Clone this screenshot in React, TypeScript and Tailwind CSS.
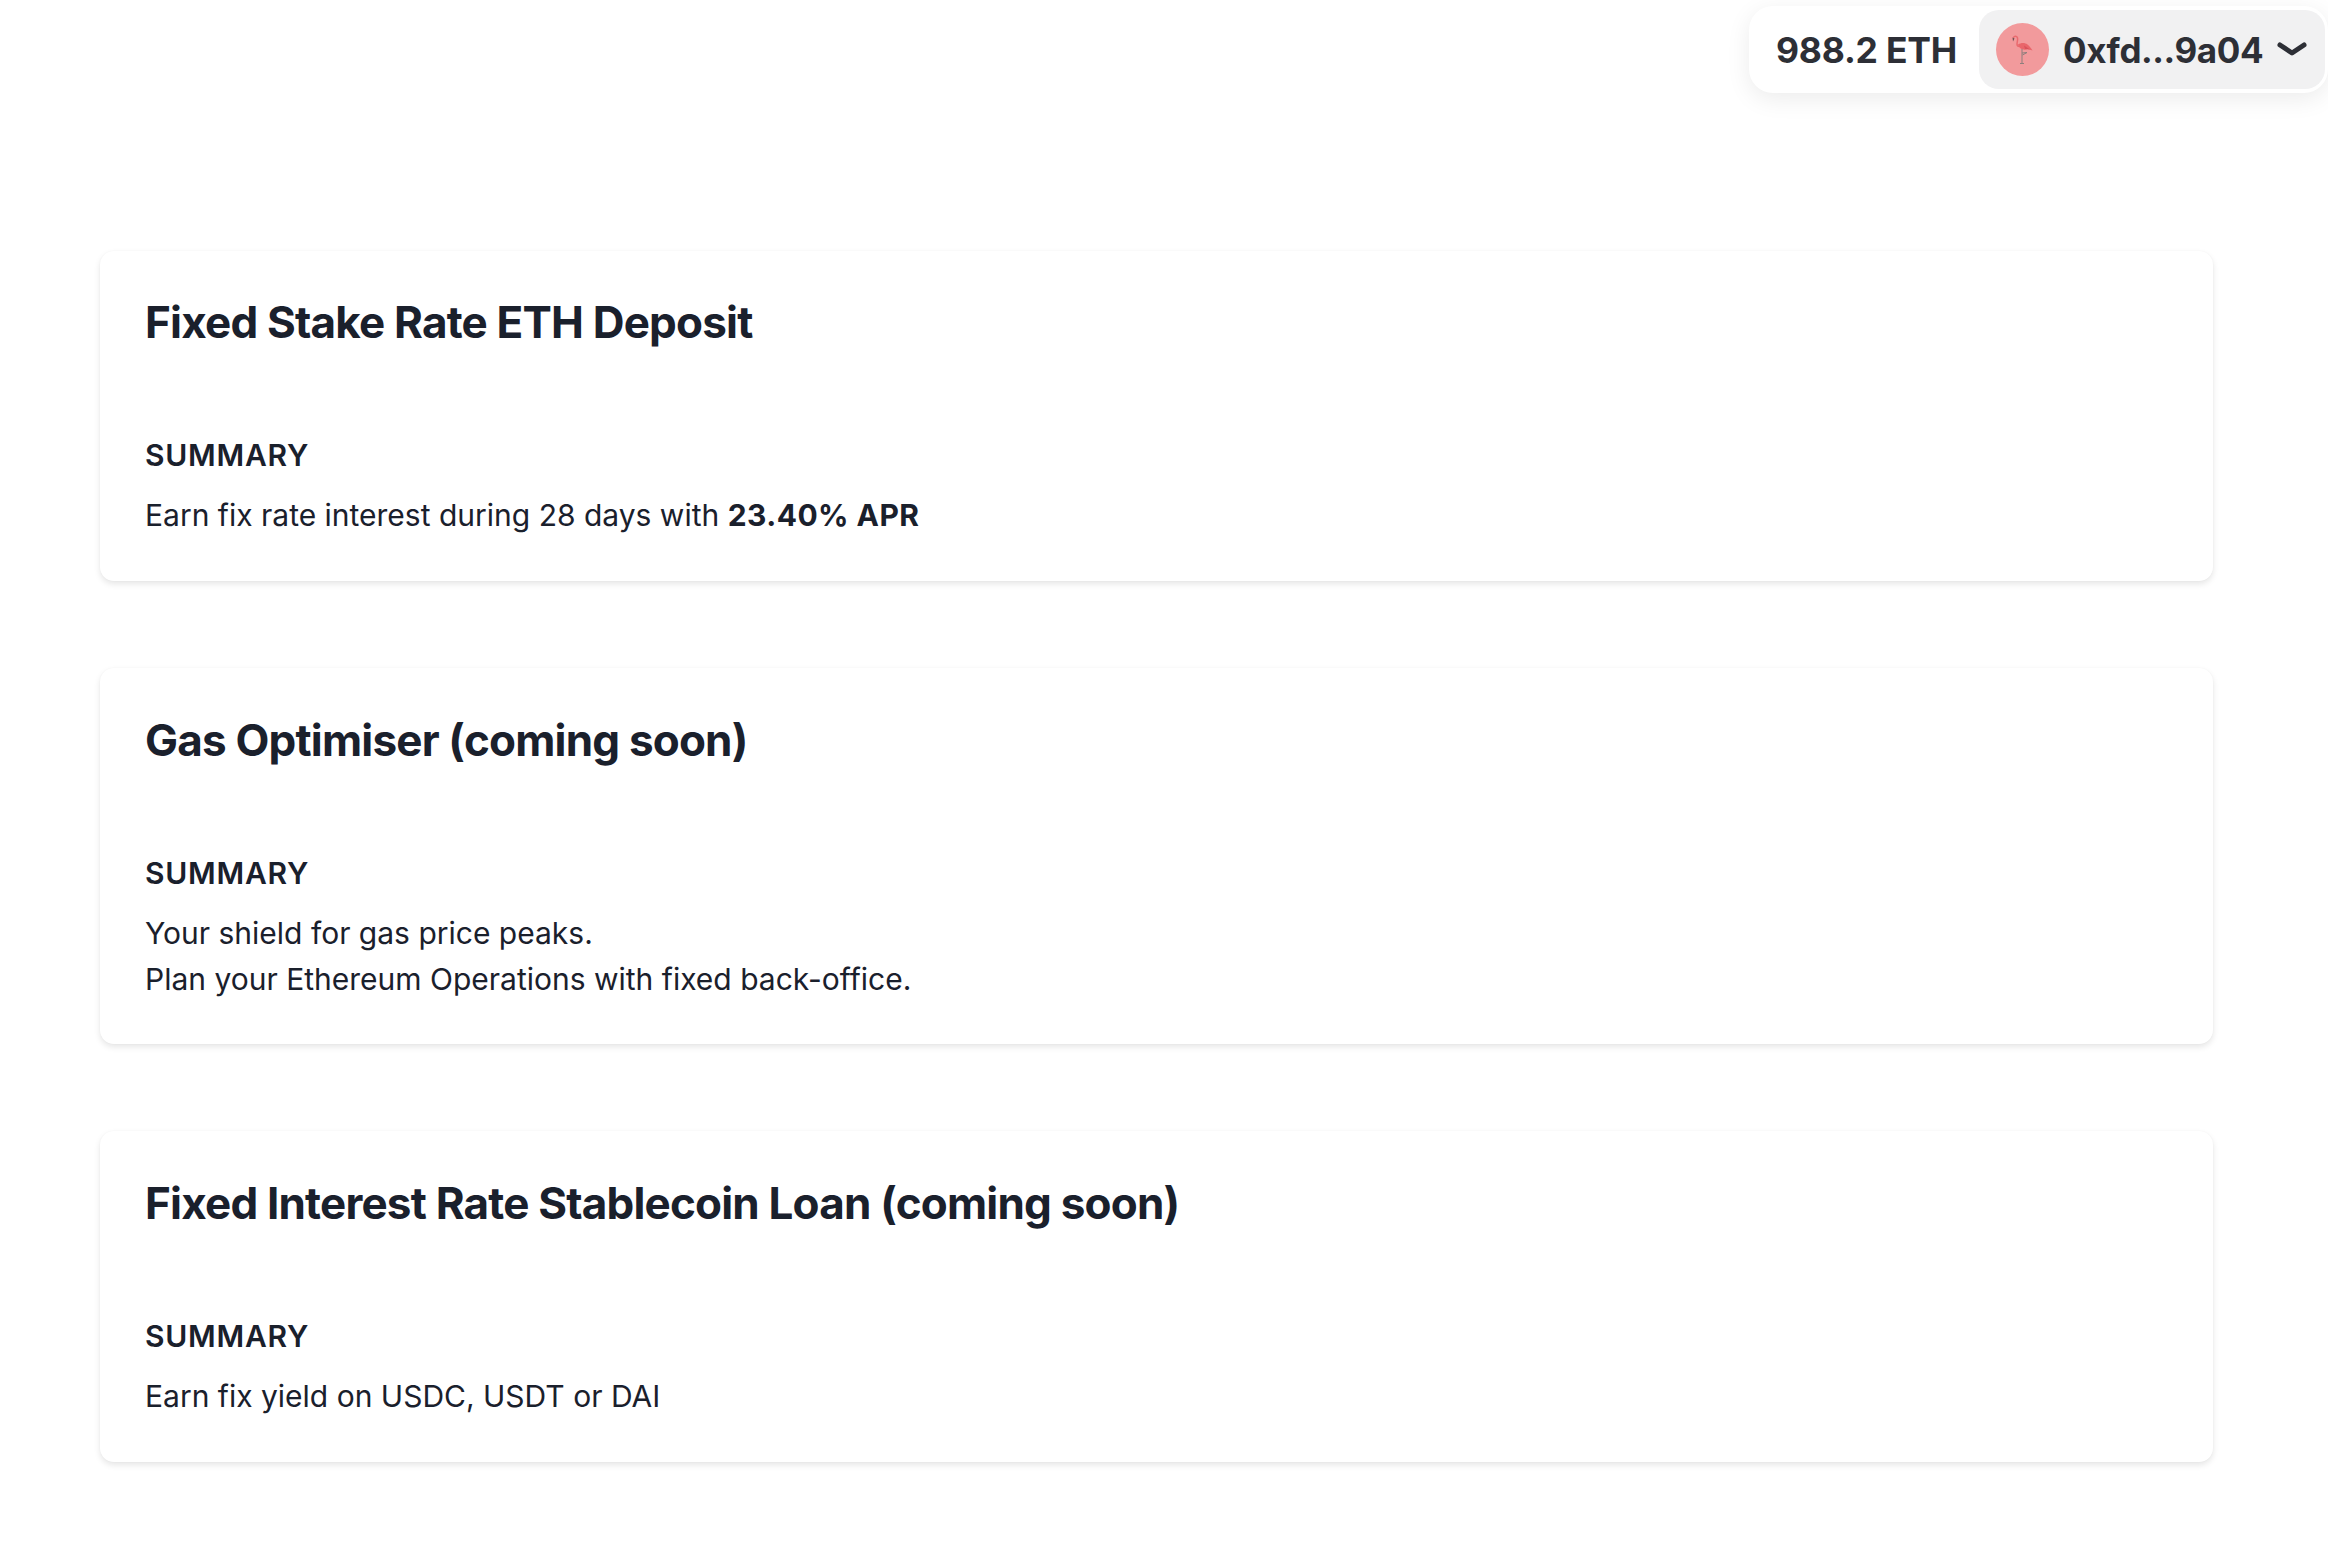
const font = { fontFamily: "Inter, 'Noto Sans', sans-serif" };

function Flamingo() {
  return (
    <svg viewBox="0 0 53 53" className="w-[53px] h-[53px]" aria-hidden="true">
      <path d="M17.500 14.500c1-2 3.500-1.500 4 .5.5 2-.5 4-.5 6 0 1.500 1 2.500 2.500 2.500" fill="none" stroke="#ea6a6e" strokeWidth="1.500" strokeLinecap="round" />
      <path d="M16.500 14.500l.5 4 1.500-3z" fill="#6a5050" />
      <path d="M22 21.500c3-2 7-2 9.500 0 2 1.500 3.500 3.500 5 6l-5-1.500c-3 1.500-8 .5-9.500-4.500z" fill="#e9666b" />
      <path d="M28 22.500l6 4-5-.5z" fill="#d9525a" />
      <path d="M26 26v14M26 30l5-.5-4.500 2.500" fill="none" stroke="#8d7e7c" strokeWidth="1" />
      <path d="M24 40.500h4" stroke="#8d7e7c" strokeWidth="1" />
    </svg>
  );
}

function Card({ title, lines, padding }: { title: string; lines: React.ReactNode[]; padding: string }) {
  return (
    <section className={`w-[2113px] rounded-[14px] bg-white px-[45px] shadow-[0_3px_6px_rgba(0,0,0,0.1),0_0_2px_rgba(0,0,0,0.03)] ${padding}`}>
      <h2 className="text-[44px] leading-[60px] font-bold tracking-[-0.8px] text-[#1a202c]">{title}</h2>
      <h3 className="mt-[81px] text-[30px] leading-[44px] font-semibold tracking-[0.75px] text-[#1a202c]">SUMMARY</h3>
      <div className="mt-[15px] text-[30px] leading-[46px] text-[#1a202c]">
        {lines.map((l, i) => (
          <p key={i}>{l}</p>
        ))}
      </div>
    </section>
  );
}

export default function App() {
  return (
    <div style={font} className="relative min-h-[1560px] w-[2328px] overflow-hidden bg-white">
      <header className="flex h-[251px] justify-end items-start pt-[6px]">
        <div className="flex h-[87px] w-[579px] items-center rounded-[24px] bg-white pr-[3px] shadow-[0_6px_24px_rgba(0,0,0,0.08)]">
          <span className="ml-[27px] w-[203px] pt-[3px] text-[35.500px] font-bold tracking-[-0.2px] text-[#2d2f36]">988.2 ETH</span>
          <div className="flex h-[79px] flex-1 items-center rounded-[20px] bg-[#f1f1f2] pl-[17px]">
            <div className="flex h-[53px] w-[53px] items-center justify-center rounded-full bg-[#f29a9c]">
              <Flamingo />
            </div>
            <span className="ml-[14px] w-[214px] pt-[1px] text-[35px] font-bold tracking-[-0.4px] text-[#2d2f36]">0xfd...9a04</span>
            <svg viewBox="0 0 30 14" className="w-[30px] h-[14px] -mt-[2px]" aria-hidden="true">
              <path d="M3 3l12 8 12-8" fill="none" stroke="#2d2f36" strokeWidth="5" strokeLinecap="round" strokeLinejoin="round" />
            </svg>
          </div>
        </div>
      </header>
      <main className="ml-[100px] flex flex-col gap-[87px]">
        <Card
          padding="pt-[41px] pb-[43px]"
          title="Fixed Stake Rate ETH Deposit"
          lines={[
            <>
              Earn fix rate interest during 28 days with <strong className="font-bold tracking-[0.45px]">23.40% APR</strong>
            </>,
          ]}
        />
        <Card
          padding="pt-[42px] pb-[42px]"
          title="Gas Optimiser (coming soon)"
          lines={["Your shield for gas price peaks.", "Plan your Ethereum Operations with fixed back-office."]}
        />
        <Card
          padding="pt-[42px] pb-[43px]"
          title="Fixed Interest Rate Stablecoin Loan (coming soon)"
          lines={["Earn fix yield on USDC, USDT or DAI"]}
        />
      </main>
    </div>
  );
}
